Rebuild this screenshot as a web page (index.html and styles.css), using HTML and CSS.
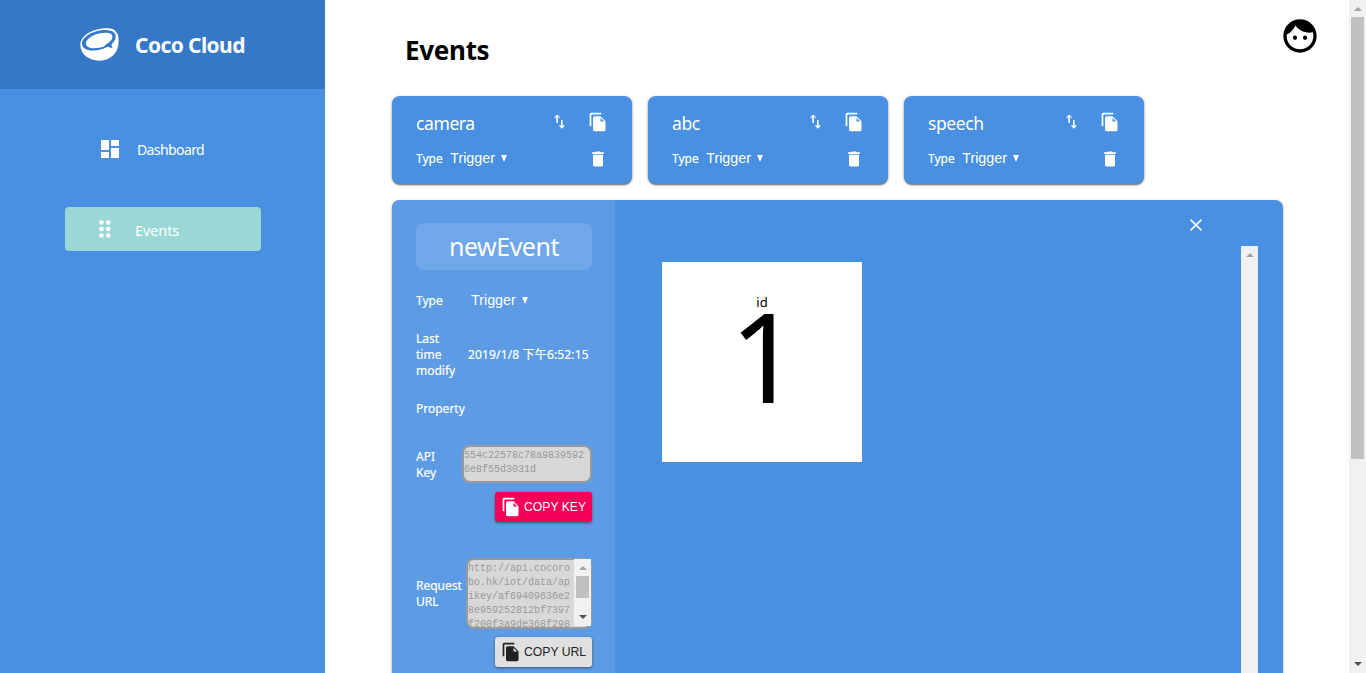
FILE: index.html
```html
<!DOCTYPE html>
<html lang="en">
<head>
<meta charset="utf-8">
<title>Coco Cloud</title>
<link rel="stylesheet" href="styles.css">
</head>
<body>
<svg class="defs" width="0" height="0">
  <symbol id="copy" viewBox="0 0 24 24"><path d="M16 1H4c-1.100 0-2 .9-2 2v14h2V3h12V1zm-1 4l6 6v10c0 1.100-.9 2-2 2H7.990C6.890 23 6 22.100 6 21l.010-14c0-1.100.89-2 1.990-2h7zm0 6.500h4.500L15 7v4.500z"/></symbol>
  <symbol id="trash" viewBox="0 0 24 24"><path d="M6 19c0 1.100.9 2 2 2h8c1.100 0 2-.9 2-2V7H6v12zM19 4h-3.500l-1-1h-5l-1 1H5v2h14V4z"/></symbol>
  <symbol id="swap" viewBox="0 0 24 24"><path d="M16 17.010V10h-2v7.010h-3L15 21l4-3.990h-3zM9 3L5 6.990h3V14h2V6.990h3L9 3z"/></symbol>
</svg>
<div class="app">
  <aside class="sidebar">
    <div class="brand">
      <svg class="logo" viewBox="0 0 116 98">
        <path fill="#fff" d="M1 50C1 22 38 1 82 1c24 0 33 14 33 39 0 33-24 57-57 57C26 97 1 78 1 50z"/>
        <path fill="#3578c6" d="M6 48C4 28 38 6 76 6c24 0 34 12 29 27-3 8-7 11-11 15 0 5 1 8 3 12-7-1-11-3-14-4-14 7-29 11-42 11C21 67 7 60 6 48z"/>
        <path fill="#fff" d="M18 46c-1-15 27-32 58-32 18 0 24 8 19 19-4 7-11 13-19 17l-4 5c-9 3-22 5-31 5-14 0-23-5-23-14z"/>
      </svg>
      <span class="brand-name">Coco Cloud</span>
    </div>
    <nav class="nav">
      <a class="nav-item">
        <svg class="icon24" viewBox="0 0 24 24"><path d="M3 13h8V3H3v10zm0 8h8v-6H3v6zm10 0h8V11h-8v10zm0-18v6h8V3h-8z"/></svg>
        <span class="nav-dashboard">Dashboard</span>
      </a>
      <a class="nav-item active">
        <svg class="dots" viewBox="0 0 12 18"><circle cx="2.500" cy="2.500" r="2.300"/><circle cx="9.200" cy="2.500" r="2.300"/><circle cx="2.500" cy="9" r="2.300"/><circle cx="9.200" cy="9" r="2.300"/><circle cx="2.500" cy="15.500" r="2.300"/><circle cx="9.200" cy="15.500" r="2.300"/></svg>
        <span class="nav-events">Events</span>
      </a>
    </nav>
  </aside>
  <main class="main">
    <header class="top">
      <h1>Events</h1>
      <svg class="face" viewBox="0 0 24 24"><path d="M9 11.750c-.69 0-1.250.56-1.250 1.250s.56 1.250 1.250 1.250 1.250-.56 1.250-1.250-.56-1.250-1.250-1.250zm6 0c-.69 0-1.250.56-1.250 1.250s.56 1.250 1.250 1.250 1.250-.56 1.250-1.250-.56-1.250-1.250-1.250zM12 2C6.480 2 2 6.480 2 12s4.480 10 10 10 10-4.480 10-10S17.520 2 12 2zm0 18c-4.410 0-8-3.590-8-8 0-.29.020-.58.050-.86 2.360-1.050 4.230-2.980 5.210-5.370C11.070 8.330 14.050 10 17.420 10c.78 0 1.530-.09 2.250-.26.210.71.330 1.470.33 2.260 0 4.410-3.590 8-8 8z"/></svg>
    </header>
    <section class="cards">
      <article class="card">
        <div class="row"><span class="name">camera</span><svg class="swap"><use href="#swap"/></svg><svg class="copy"><use href="#copy"/></svg></div>
        <div class="row low"><span class="label">Type</span><span class="trigger">Trigger<svg class="caret" viewBox="0 0 6 7"><path d="M0 0h6L3 7z"/></svg></span><svg class="trash"><use href="#trash"/></svg></div>
      </article>
      <article class="card">
        <div class="row"><span class="name">abc</span><svg class="swap"><use href="#swap"/></svg><svg class="copy"><use href="#copy"/></svg></div>
        <div class="row low"><span class="label">Type</span><span class="trigger">Trigger<svg class="caret" viewBox="0 0 6 7"><path d="M0 0h6L3 7z"/></svg></span><svg class="trash"><use href="#trash"/></svg></div>
      </article>
      <article class="card">
        <div class="row"><span class="name">speech</span><svg class="swap"><use href="#swap"/></svg><svg class="copy"><use href="#copy"/></svg></div>
        <div class="row low"><span class="label">Type</span><span class="trigger">Trigger<svg class="caret" viewBox="0 0 6 7"><path d="M0 0h6L3 7z"/></svg></span><svg class="trash"><use href="#trash"/></svg></div>
      </article>
    </section>
    <section class="detail">
      <div class="info">
        <div class="event-name">newEvent</div>
        <div class="field type-field"><span class="label">Type</span><span class="trigger">Trigger<svg class="caret" viewBox="0 0 6 7"><path d="M0 0h6L3 7z"/></svg></span></div>
        <div class="field time-field"><span class="label">Last<br>time<br>modify</span><span class="time">2019/1/8 下午6:52:15</span></div>
        <div class="field prop-field"><span class="label">Property</span></div>
        <div class="field key-field"><span class="label">API<br>Key</span><div class="box key-box">554c22578c78a9839592<br>6e8f55d3031d</div></div>
        <button class="btn pink"><svg class="copy"><use href="#copy"/></svg><span>COPY KEY</span></button>
        <div class="field url-field"><span class="label">Request<br>URL</span>
          <div class="box url-box"><div class="url-text">http://api.cocoro<br>bo.hk/iot/data/ap<br>ikey/af69409636e2<br>8e959252812bf7397<br>f200f3a9de368f298</div>
            <div class="sb url-sb"><i class="up"></i><i class="thumb"></i><i class="down"></i></div></div>
        </div>
        <button class="btn grey"><svg class="copy"><use href="#copy"/></svg><span>COPY URL</span></button>
      </div>
      <div class="data">
        <svg class="close" viewBox="0 0 12 12"><path d="M.6.6l10.800 10.800M11.400.6L.6 11.400"/></svg>
        <div class="data-body">
          <div class="tile"><span class="tile-label">id</span><span class="tile-value">1</span></div>
          <div class="sb data-sb"><i class="up"></i></div>
        </div>
      </div>
    </section>
  </main>
  <div class="sb page-sb"><i class="up"></i><i class="thumb"></i><i class="down"></i></div>
</div>
</body>
</html>
```
FILE: styles.css
```css
* { box-sizing: border-box; }
body { margin: 0; font-family: "Noto Sans", "Noto Sans CJK SC", sans-serif; color: #fff; background: #fff; overflow: hidden; }
.defs { display: block; position: absolute; }
svg { display: block; flex: none; fill: currentColor; }
.app { display: flex; height: 673px; overflow: hidden; }

.sidebar { width: 325px; flex: none; background: #4990e2; }
.brand { height: 89px; background: #3578c6; display: flex; align-items: center; padding-left: 80px; }
.logo { width: 39px; height: 33px; margin-right: 16px; }
.brand-name { font-weight: 700; font-size: 21px; letter-spacing: -.6px; line-height: 28px; white-space: nowrap; }
.nav { padding: 38px 64px 0 65px; display: flex; flex-direction: column; gap: 36px; }
.nav-item { height: 44px; border-radius: 4px; display: flex; align-items: center; font-size: 14px; padding-left: 33px; }
.nav-item.active { background: #9bd7d5; }
.icon24 { width: 24px; height: 24px; }
.nav-dashboard { margin-left: 15px; letter-spacing: -.6px; }
.dots { width: 12px; height: 18px; margin-left: 1px; }
.nav-events { margin: 2px 0 0 24px; font-size: 14.500px; letter-spacing: -.1px; }

.main { width: 1024px; flex: none; padding-left: 67px; }
.top { height: 96px; display: flex; justify-content: space-between; padding: 16px 29px 0 13px; color: #000; }
h1 { margin: 16px 0 0; font-size: 26px; letter-spacing: -.3px; line-height: 36px; font-weight: 700; }
.face { width: 40px; height: 40px; }
.cards { display: flex; gap: 16px; }
.card { width: 240px; height: 88px; border-radius: 8px; background: #4990e2; padding: 13px 24px 0; box-shadow: 0 1px 3px rgba(0,0,0,.4), 0 1px 1px rgba(0,0,0,.3); }
.row { height: 26px; display: flex; align-items: center; }
.name { flex: 1; font-size: 17.500px; letter-spacing: -.4px; line-height: 26px; padding-top: 2px; }
.swap { width: 19px; height: 19px; margin: 0 19px 2px 0; }
.row .copy { width: 20px; height: 20px; }
.low { margin-top: 10px; }
.label { font-size: 12px; line-height: 16px; -webkit-text-stroke: .2px currentColor; }
.trigger { font-family: "Liberation Sans", sans-serif; font-size: 14.300px; line-height: 16px; display: flex; align-items: center; }
.caret { width: 6px; height: 7px; margin-left: 6px; }
.low .trigger { flex: 1; margin-left: 7.500px; }
.low .label { padding-top: 1px; }
.trash { width: 20px; height: 20px; margin-top: 1px; }

.detail { margin-top: 16px; width: 891px; height: 520px; border-radius: 8px; background: #4990e2; display: flex; box-shadow: 0 1px 3px rgba(0,0,0,.35); overflow: hidden; }
.info { width: 223px; flex: none; background: #5d9be5; padding: 23px 23px 0 24px; display: flex; flex-direction: column; }
.event-name { height: 47px; border-radius: 8px; background: #70a7e8; font-size: 25px; letter-spacing: -.5px; line-height: 47px; text-align: center; }
.field { display: flex; align-items: center; flex: none; }
.type-field { height: 16px; margin-top: 22px; }
.type-field .label { width: 55px; padding-top: 1px; }
.time-field { height: 48px; margin-top: 23px; }
.time-field .label { width: 52px; }
.time { font-size: 12px; letter-spacing: .15px; line-height: 16px; white-space: nowrap; -webkit-text-stroke: .2px currentColor; }
.prop-field { height: 16px; margin-top: 22px; }
.key-field { height: 38px; margin-top: 28px; justify-content: space-between; }
.key-field .label, .url-field .label { padding-top: 1px; }
.box { border: 2px solid #999; border-radius: 8px; background: #d8d8d8; color: #999; font-family: "Liberation Mono", monospace; font-size: 10px; line-height: 14px; white-space: nowrap; }
.key-box { width: 130px; height: 38px; padding-top: 2px; }
.btn { width: 97px; height: 30px; flex: none; align-self: flex-end; border: 0; border-radius: 3px; padding: 0 6px; display: flex; align-items: center; font-family: "Liberation Sans", sans-serif; font-size: 12.200px; box-shadow: 0 1px 3px rgba(0,0,0,.45); white-space: nowrap; }
.btn .copy { width: 20px; height: 20px; margin-right: 3px; }
.pink { background: #f50057; color: #fff; margin-top: 9px; }
.grey { background: #e0e0e0; color: #212121; margin-top: 8px; }
.url-field { height: 71px; margin-top: 36px; justify-content: space-between; }
.url-box { width: 126px; height: 71px; display: flex; position: relative; }
.url-text { height: 67px; overflow: hidden; padding-top: 2px; }

.data { flex: 1; padding-right: 25px; }
.close { width: 12px; height: 12px; margin: 19px 0 15px 575px; stroke: #fff; stroke-width: 1.500; fill: none; }
.data-body { display: flex; justify-content: space-between; padding-left: 47px; }
.tile { width: 200px; height: 200px; margin-top: 16px; background: #fff; color: #000; display: flex; flex-direction: column; align-items: center; padding-top: 32px; }
.tile-label { font-size: 13px; line-height: 16px; }
.tile-value { font-size: 124px; line-height: 89px; padding-left: 6px; }

.sb { position: relative; width: 17px; flex: none; background: #f1f1f1; display: flex; flex-direction: column; align-items: center; }
.up, .down { flex: none; border: 4px solid transparent; width: 8px; height: 4px; }
.up { border-top: 0; border-bottom-color: #a3a3a3; margin: 7px 0 6px; }
.down { border-bottom: 0; border-top-color: #505050; margin: auto 0 7px; }
.thumb { width: 13px; background: #c1c1c1; flex: none; }
.page-sb .thumb { height: 442px; }
.data-sb { height: 474px; }
.url-sb { position: absolute; right: -1px; top: -1px; height: 67px; }
.url-sb .thumb { height: 22px; }
```
